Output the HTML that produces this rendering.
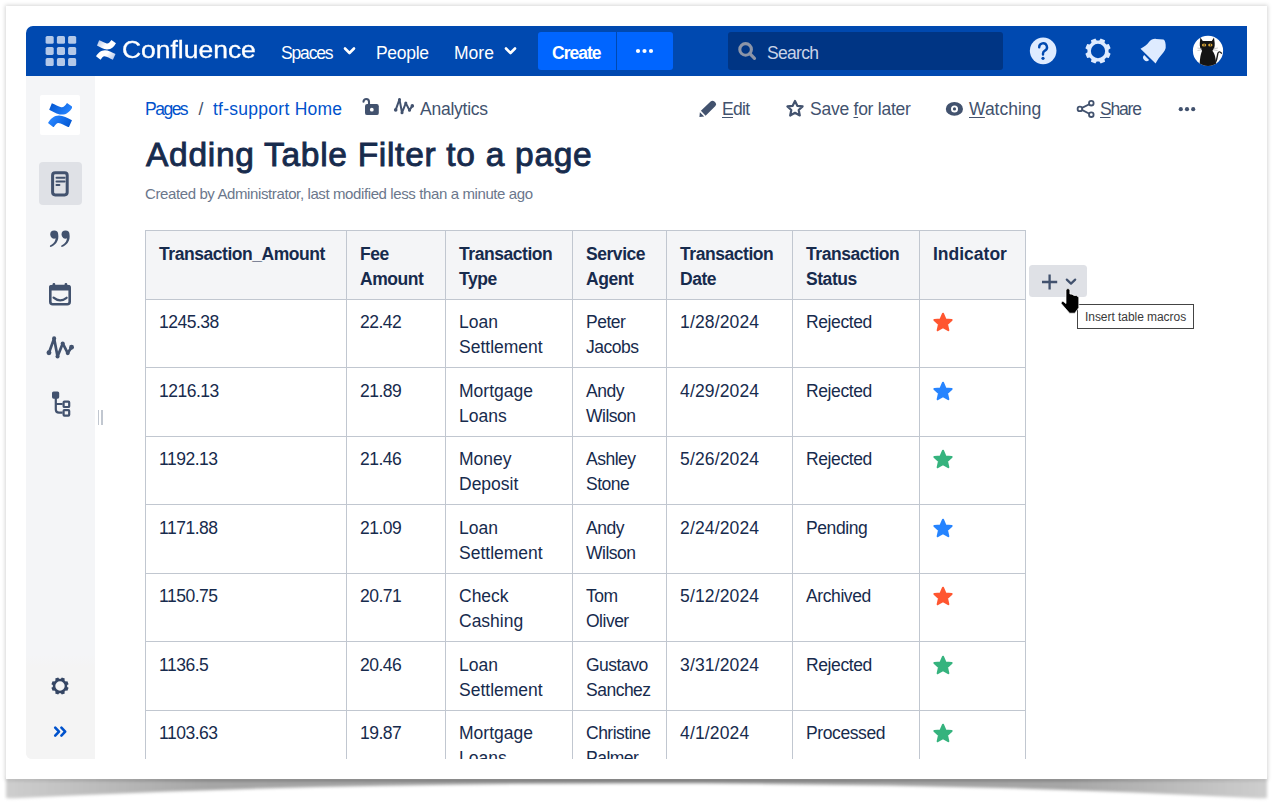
<!DOCTYPE html>
<html><head><meta charset="utf-8">
<style>
*{box-sizing:border-box}
html,body{margin:0;padding:0}
body{width:1281px;height:808px;overflow:hidden;position:relative;background:#fff;font-family:"Liberation Sans",sans-serif;color:#172B4D}
.a{position:absolute}
.t{position:absolute;white-space:nowrap;line-height:1}
#frame{left:6px;top:6px;width:1261px;height:773px;background:#fff;box-shadow:0 0 4px 1px rgba(0,0,0,.16)}
#hdr{left:26px;top:26px;width:1221px;height:50px;background:#0049B0;border-top-left-radius:7px}
#side{left:26px;top:76px;width:69px;height:683px;background:#F4F5F7;border-bottom-left-radius:6px}
.hw{color:#fff;font-size:17.5px}
.crumb{color:#0052CC;font-size:17.5px}
.act{color:#42526E;font-size:17.5px}
u{text-decoration:underline;text-decoration-thickness:1px;text-underline-offset:2px}
.c{position:absolute;white-space:nowrap;font-size:17.5px;line-height:25px;color:#172B4D}
.h{font-weight:bold;letter-spacing:-0.45px}
.n{letter-spacing:-0.5px}
</style></head><body>
<!-- bottom curled shadow -->
<svg class="a" style="left:0;top:770px" width="1281" height="38" viewBox="0 0 1281 38">
<defs>
<linearGradient id="shh" x1="0" y1="0" x2="1" y2="0">
<stop offset="0" stop-color="#cecece"/><stop offset="0.16" stop-color="#a6a6a6"/><stop offset="0.5" stop-color="#999"/><stop offset="0.84" stop-color="#a6a6a6"/><stop offset="1" stop-color="#cecece"/>
</linearGradient>
<linearGradient id="sht" x1="0" y1="0" x2="1" y2="0">
<stop offset="0" stop-color="#000" stop-opacity="0"/><stop offset="0.15" stop-color="#000" stop-opacity="0.12"/><stop offset="0.5" stop-color="#000" stop-opacity="0.14"/><stop offset="0.85" stop-color="#000" stop-opacity="0.12"/><stop offset="1" stop-color="#000" stop-opacity="0"/>
</linearGradient>
<filter id="shb" x="-5%" y="-50%" width="110%" height="200%"><feGaussianBlur stdDeviation="1.5"/></filter>
<filter id="shb2" x="-5%" y="-100%" width="110%" height="300%"><feGaussianBlur stdDeviation="1"/></filter>
</defs>
<path filter="url(#shb)" fill="url(#shh)" d="M6,8 L1267,8 L1267,27.5 Q1266,28.6 1258,28.3 C1050,17 850,13.5 640.5,13.5 C431,13.5 231,17 15,28.3 Q7,28.6 6,27.5 Z"/>
<rect filter="url(#shb2)" x="6" y="8" width="1261" height="3.5" fill="url(#sht)"/>
</svg>

<div id="frame" class="a"></div>
<div id="hdr" class="a"></div>
<div id="side" class="a"></div>
<div class="a" style="left:26px;top:655px;width:69px;height:104px;background:linear-gradient(#F4F5F7,#F4F4F4 12px);border-bottom-left-radius:6px"></div>

<!-- header content -->
<svg class="a" style="left:45px;top:35px" width="32" height="32" viewBox="0 0 32 32">
<g fill="#B3C8E8">
<rect x="0.6" y="0.9" width="8.1" height="7.9" rx="1.6"/><rect x="11.9" y="0.9" width="8.1" height="7.9" rx="1.6"/><rect x="23.1" y="0.9" width="8.1" height="7.9" rx="1.6"/>
<rect x="0.6" y="12" width="8.1" height="7.9" rx="1.6"/><rect x="11.9" y="12" width="8.1" height="7.9" rx="1.6"/><rect x="23.1" y="12" width="8.1" height="7.9" rx="1.6"/>
<rect x="0.6" y="23.1" width="8.1" height="7.9" rx="1.6"/><rect x="11.9" y="23.1" width="8.1" height="7.9" rx="1.6"/><rect x="23.1" y="23.1" width="8.1" height="7.9" rx="1.6"/>
</g></svg>
<svg class="a" style="left:95.9px;top:40.3px" width="20" height="19.8" viewBox="0 0 24.6 24.4">
<defs><linearGradient id="lg1" x1="0" y1="0" x2="1" y2="0.4"><stop offset="0" stop-color="#A8BEE6"/><stop offset="0.6" stop-color="#fff"/></linearGradient>
<linearGradient id="lg2" x1="1" y1="1" x2="0" y2="0.6"><stop offset="0" stop-color="#A8BEE6"/><stop offset="0.6" stop-color="#fff"/></linearGradient></defs>
<path fill="url(#lg1)" d="M1.2,6.8 L3.85,0.3 C7,1.5 10.5,3.6 13.2,4.2 C15.5,4.6 17.2,2.5 19,0 L24.6,3.9 C22.5,7.5 19.5,11.6 13.5,11.6 C9,11.6 5,8.5 1.2,6.8 Z"/>
<path fill="url(#lg2)" d="M0,19.9 C2.5,16 6,12.5 11,12.5 C15,12.5 19.5,15 24,17.2 L20.8,24.4 C17,22.5 13.5,20 10.4,19.9 C8.5,19.9 7.2,22 5.6,24.4 Z"/>
</svg>
<div class="t" style="left:122px;top:39px;font-size:23px;color:#fff;-webkit-text-stroke:0.3px #fff;transform:scaleX(1.15);transform-origin:0 0">Confluence</div>
<div class="t hw" style="left:281px;top:45px;letter-spacing:-1.15px">Spaces</div>
<svg class="a" style="left:343px;top:46px" width="13" height="10" viewBox="0 0 13 10"><path d="M2,2.5 L6.5,7 L11,2.5" fill="none" stroke="#fff" stroke-width="2.6" stroke-linecap="round" stroke-linejoin="round"/></svg>
<div class="t hw" style="left:376px;top:45px;letter-spacing:-0.3px">People</div>
<div class="t hw" style="left:454px;top:45px">More</div>
<svg class="a" style="left:504px;top:46px" width="13" height="10" viewBox="0 0 13 10"><path d="M2,2.5 L6.5,7 L11,2.5" fill="none" stroke="#fff" stroke-width="2.6" stroke-linecap="round" stroke-linejoin="round"/></svg>
<div class="a" style="left:538px;top:32px;width:135px;height:38px;background:#0065FF;border-radius:3px"></div>
<div class="a" style="left:616px;top:32px;width:1px;height:38px;background:#0049B0"></div>
<div class="t" style="left:552px;top:45px;font-size:17.5px;font-weight:bold;color:#fff;letter-spacing:-1px">Create</div>
<svg class="a" style="left:635px;top:48px" width="20" height="6" viewBox="0 0 20 6"><g fill="#fff"><circle cx="3" cy="3" r="2.1"/><circle cx="9.5" cy="3" r="2.1"/><circle cx="16" cy="3" r="2.1"/></g></svg>
<div class="a" style="left:728px;top:32px;width:275px;height:38px;background:#003584;border-radius:3px"></div>
<svg class="a" style="left:737px;top:42px" width="20" height="20" viewBox="0 0 20 20"><circle cx="8.6" cy="7.4" r="5.8" fill="none" stroke="#8C95A8" stroke-width="3.1"/><path d="M12.9,11.7 L17.5,16.4" stroke="#8C95A8" stroke-width="3.2" stroke-linecap="round"/></svg>
<div class="t" style="left:767px;top:45px;font-size:17.5px;color:#C9D3E8;letter-spacing:-0.7px">Search</div>

<!-- header right -->
<svg class="a" style="left:1028px;top:36px" width="30" height="30" viewBox="0 0 30 30">
<circle cx="15.15" cy="14.85" r="13.3" fill="#DEEBFF"/>
<path d="M11.2,11.4 A3.9,3.9 0 1 1 17,14.6 C15.7,15.5 15,16.2 15,17.4 L15,18.6" fill="none" stroke="#0049B0" stroke-width="2.4" stroke-linecap="round"/>
<circle cx="15" cy="22.3" r="1.6" fill="#0049B0"/>
</svg>
<svg class="a" style="left:1082px;top:35px" width="32" height="32" viewBox="0 0 32 32"><path fill="#DEEBFF" fill-rule="evenodd" d="M18.68,3.38 L23.03,5.18 L22.53,7.65 L24.35,9.47 L26.82,8.97 L28.62,13.32 L26.52,14.71 L26.52,17.29 L28.62,18.68 L26.82,23.03 L24.35,22.53 L22.53,24.35 L23.03,26.82 L18.68,28.62 L17.29,26.52 L14.71,26.52 L13.32,28.62 L8.97,26.82 L9.47,24.35 L7.65,22.53 L5.18,23.03 L3.38,18.68 L5.48,17.29 L5.48,14.71 L3.38,13.32 L5.18,8.97 L7.65,9.47 L9.47,7.65 L8.97,5.18 L13.32,3.38 L14.71,5.48 L17.29,5.48 Z M23.15,16 A7.15,7.15 0 1 0 8.85,16 A7.15,7.15 0 1 0 23.15,16 Z"/></svg>
<svg class="a" style="left:1135px;top:34px" width="36" height="34" viewBox="0 0 36 34">
<path fill="#DEEBFF" d="M5.5,14.7 C9,13 12,11 14,8 C16,5.5 18.5,4.6 21,4.9 L28.5,5.5 C30.2,6.5 30.9,9.5 30.7,13.9 C30,17 27.5,19.5 25.3,22.3 C23,25 21.6,28 20.6,29.4 Z"/>
<path fill="#DEEBFF" d="M9.2,21.1 L14.1,26 A3.4,3.4 0 0 1 9.2,21.1 Z"/>
</svg>
<svg class="a" style="left:1192px;top:35px" width="32" height="32" viewBox="0 0 32 32">
<defs><clipPath id="avc"><circle cx="16" cy="15.8" r="15.1"/></clipPath></defs>
<circle cx="16" cy="15.8" r="15.1" fill="#fff"/>
<g clip-path="url(#avc)">
<path fill="#141414" d="M8.4,2.45 L10.8,5.9 L19.8,5.9 L22,2.45 L22.7,8 C22.9,11.5 22.3,13.8 20.6,15.2 C20.6,16 20.7,16.4 20.9,16.6 C22.8,19 23.9,23 24.2,31 L7.6,31 C7.9,23 8.8,19 9.8,16.6 C10,16.4 10,16 9.9,15.2 C8.2,13.8 7.6,11.5 7.8,8 Z"/>
<path d="M23.4,27.6 C25,25 25.2,21 25.8,18.6 C26.3,16.6 28,16.2 29.4,18.2" fill="none" stroke="#1a1a1a" stroke-width="1.4" stroke-linecap="round"/>
<ellipse cx="12.1" cy="9.9" rx="2.2" ry="1.5" fill="#D8A637"/><ellipse cx="18.3" cy="9.9" rx="2.2" ry="1.5" fill="#D8A637"/>
<rect x="11.8" y="8.6" width="0.7" height="2.6" fill="#222"/><rect x="18" y="8.6" width="0.7" height="2.6" fill="#222"/>
<path d="M5.5,13 L10,13.8 M5.5,15.5 L10,14.8 M26,13 L21,13.8 M25.5,15.5 L21,14.8" stroke="#999" stroke-width="0.5"/>
</g></svg>

<!-- breadcrumb row -->
<div class="t crumb" style="left:145px;top:101px;letter-spacing:-1.5px">Pages</div>
<div class="t" style="left:198.5px;top:101px;font-size:17.5px;color:#42526E">/</div>
<div class="t crumb" style="left:213px;top:101px;letter-spacing:0.26px">tf-support Home</div>
<svg class="a" style="left:358px;top:94px" width="26" height="26" viewBox="0 0 26 26">
<rect x="7" y="10.1" width="13.8" height="11" rx="2.2" fill="#42526E"/>
<circle cx="13.8" cy="15.7" r="1.9" fill="#fff"/>
<path d="M5.5,7.7 A2.75,2.75 0 0 1 11,7.7 L11,10.5" fill="none" stroke="#42526E" stroke-width="2.1" stroke-linecap="round"/>
</svg>
<svg class="a" style="left:390px;top:94px" width="28" height="24" viewBox="0 0 28 24">
<path d="M5.7,15.9 L9.5,5.4 L12,18.7 L15.8,9.1 L19.5,16.2 L22.3,11.9" fill="none" stroke="#42526E" stroke-width="2" stroke-linecap="round" stroke-linejoin="round"/>
<g fill="#42526E"><circle cx="5.7" cy="15.9" r="1.8"/><circle cx="9.5" cy="5.4" r="1.5"/><circle cx="12" cy="18.7" r="1.5"/><circle cx="15.8" cy="9.1" r="1.5"/><circle cx="19.5" cy="16.2" r="1.5"/><circle cx="22.3" cy="11.9" r="1.8"/></g>
</svg>
<div class="t act" style="left:420px;top:101px;letter-spacing:-0.25px">Analytics</div>

<!-- actions -->
<svg class="a" style="left:694px;top:96px" width="30" height="26" viewBox="0 0 30 26">
<path fill="#42526E" d="M6.9,14.8 L16.6,5.4 Q18.6,3.8 20.4,5.6 L21.4,6.6 Q23,8.4 21.4,10.1 L11.6,19.7 Z"/>
<path fill="#42526E" d="M5.9,16.2 L10.2,20.5 L5.4,21.1 Z"/>
</svg>
<div class="t act" style="left:722px;top:101px;letter-spacing:-0.66px"><u>E</u>dit</div>
<svg class="a" style="left:782px;top:96px" width="26" height="26" viewBox="0 0 26 26">
<path d="M13,5 L15.3,9.8 L20.6,10.4 L16.7,14 L17.8,19.5 L13,16.8 L8.2,19.5 L9.3,14 L5.4,10.4 L10.7,9.8 Z" fill="none" stroke="#42526E" stroke-width="2.2" stroke-linejoin="round"/>
</svg>
<div class="t act" style="left:810px;top:101px;letter-spacing:-0.25px">Save <u>f</u>or later</div>
<svg class="a" style="left:940px;top:96px" width="30" height="26" viewBox="0 0 30 26">
<ellipse cx="14.4" cy="12.9" rx="8.6" ry="6.9" fill="#42526E"/>
<circle cx="14.5" cy="12.9" r="3.5" fill="#fff"/><circle cx="14.5" cy="12.9" r="1.6" fill="#42526E"/>
</svg>
<div class="t act" style="left:969px;top:101px"><u>W</u>atching</div>
<svg class="a" style="left:1072px;top:96px" width="28" height="26" viewBox="0 0 28 26">
<path d="M8,12.9 L19.3,7.2 M8,12.9 L19.3,18.7" stroke="#42526E" stroke-width="1.8"/>
<g fill="#fff" stroke="#42526E" stroke-width="1.8"><circle cx="19.3" cy="7.2" r="2.3"/><circle cx="7.9" cy="12.9" r="2.3"/><circle cx="19.3" cy="18.7" r="2.3"/></g>
</svg>
<div class="t act" style="left:1100px;top:101px;letter-spacing:-1.2px"><u>S</u>hare</div>
<svg class="a" style="left:1176px;top:104px" width="22" height="10" viewBox="0 0 22 10"><g fill="#42526E"><circle cx="4.8" cy="5.2" r="2.1"/><circle cx="11" cy="5.2" r="2.1"/><circle cx="17.2" cy="5.2" r="2.1"/></g></svg>

<!-- title -->
<div class="t" style="left:146px;top:138px;font-size:33.5px;color:#172B4D;letter-spacing:0.71px;-webkit-text-stroke:0.9px #172B4D">Adding Table Filter to a page</div>
<div class="t" style="left:145px;top:186px;font-size:15px;color:#6B778C;letter-spacing:-0.39px">Created by Administrator, last modified less than a minute ago</div>

<!-- sidebar -->
<div class="a" style="left:40px;top:95px;width:40px;height:40px;background:#fff;border-radius:2px"></div>
<svg class="a" style="left:47.6px;top:102.7px" width="24.6" height="24.4" viewBox="0 0 24.6 24.4">
<defs><linearGradient id="sg1" x1="0" y1="0" x2="1" y2="0.4"><stop offset="0" stop-color="#0052CC"/><stop offset="1" stop-color="#2684FF"/></linearGradient>
<linearGradient id="sg2" x1="1" y1="1" x2="0" y2="0.6"><stop offset="0" stop-color="#0052CC"/><stop offset="1" stop-color="#2684FF"/></linearGradient></defs>
<path fill="url(#sg1)" d="M1.2,6.8 L3.85,0.3 C7,1.5 10.5,3.6 13.2,4.2 C15.5,4.6 17.2,2.5 19,0 L24.6,3.9 C22.5,7.5 19.5,11.6 13.5,11.6 C9,11.6 5,8.5 1.2,6.8 Z"/>
<path fill="url(#sg2)" d="M0,19.9 C2.5,16 6,12.5 11,12.5 C15,12.5 19.5,15 24,17.2 L20.8,24.4 C17,22.5 13.5,20 10.4,19.9 C8.5,19.9 7.2,22 5.6,24.4 Z"/>
</svg>
<div class="a" style="left:39px;top:162px;width:43px;height:43px;background:#DFE1E6;border-radius:4px"></div>
<svg class="a" style="left:44px;top:165px" width="32" height="36" viewBox="0 0 32 36">
<rect x="8.6" y="7.7" width="14.6" height="22.2" rx="2.6" fill="none" stroke="#42526E" stroke-width="3"/>
<path d="M12.5,12.7 L20.6,12.7 M12.5,16.4 L20.6,16.4 M12.5,20.1 L15.4,20.1" stroke="#42526E" stroke-width="2" stroke-linecap="round"/>
</svg>
<svg class="a" style="left:44px;top:224px" width="32" height="30" viewBox="0 0 32 30">
<g fill="#42526E"><path d="M6.2,10.6 A4,4 0 0 1 14.2,10.6 C14.6,13 14.4,16.5 12.3,19 C10.8,20.9 8.5,22.6 6.3,22.9 Q5.5,22.6 6.1,21.6 C8.5,20.4 10.6,18.5 11.4,15.8 L11.57,14.36 A4,4 0 0 1 6.2,10.6 Z"/><path transform="translate(11.3,0)" d="M6.2,10.6 A4,4 0 0 1 14.2,10.6 C14.6,13 14.4,16.5 12.3,19 C10.8,20.9 8.5,22.6 6.3,22.9 Q5.5,22.6 6.1,21.6 C8.5,20.4 10.6,18.5 11.4,15.8 L11.57,14.36 A4,4 0 0 1 6.2,10.6 Z"/></g></svg>
<svg class="a" style="left:44px;top:278px" width="32" height="32" viewBox="0 0 32 32">
<rect x="6.3" y="8" width="19.4" height="18.2" rx="2.5" fill="none" stroke="#42526E" stroke-width="2.6"/>
<rect x="5" y="7" width="21.8" height="5.5" rx="2" fill="#42526E"/>
<rect x="8.6" y="5" width="2.6" height="4" rx="1" fill="#42526E"/><rect x="20.6" y="5" width="2.6" height="4" rx="1" fill="#42526E"/>
<path d="M9.6,19.6 Q16,25 22.6,19.8" fill="none" stroke="#42526E" stroke-width="2.3" stroke-linecap="round"/>
</svg>
<svg class="a" style="left:43.7px;top:335px" width="38.1" height="34.3" viewBox="0 0 28 25.2">
<g transform="translate(-2.05,-2.9)">
<path d="M5.7,15.9 L9.5,5.4 L12,18.7 L15.8,9.1 L19.5,16.2 L22.3,11.9" fill="none" stroke="#42526E" stroke-width="2" stroke-linecap="round" stroke-linejoin="round"/>
<g fill="#42526E"><circle cx="5.7" cy="15.9" r="1.8"/><circle cx="9.5" cy="5.4" r="1.5"/><circle cx="12" cy="18.7" r="1.5"/><circle cx="15.8" cy="9.1" r="1.5"/><circle cx="19.5" cy="16.2" r="1.5"/><circle cx="22.3" cy="11.9" r="1.8"/></g>
</g></svg>
<svg class="a" style="left:44px;top:386px" width="32" height="36" viewBox="0 0 32 36">
<rect x="8" y="5.5" width="7.2" height="7.2" rx="1.6" fill="#42526E"/>
<path d="M11.8,10 L11.8,23.5 Q11.8,26.6 15,26.6 L18.6,26.6 M11.8,18 L18.6,18" fill="none" stroke="#42526E" stroke-width="2.2"/>
<rect x="19.6" y="15.6" width="5.6" height="5.4" rx="0.8" fill="none" stroke="#42526E" stroke-width="2.2"/>
<rect x="19.6" y="24.2" width="5.6" height="5.4" rx="0.8" fill="none" stroke="#42526E" stroke-width="2.2"/>
</svg>
<div class="a" style="left:97.5px;top:410px;width:1.6px;height:15px;background:#C1C7D0"></div>
<div class="a" style="left:101px;top:410px;width:1.6px;height:15px;background:#C1C7D0"></div>
<svg class="a" style="left:50.35px;top:676px" width="20" height="20" viewBox="0 0 20 20"><path fill="#344563" fill-rule="evenodd" d="M11.83,1.39 L14.79,2.62 L14.43,4.33 L15.67,5.57 L17.38,5.21 L18.61,8.17 L17.15,9.12 L17.15,10.88 L18.61,11.83 L17.38,14.79 L15.67,14.43 L14.43,15.67 L14.79,17.38 L11.83,18.61 L10.88,17.15 L9.12,17.15 L8.17,18.61 L5.21,17.38 L5.57,15.67 L4.33,14.43 L2.62,14.79 L1.39,11.83 L2.85,10.88 L2.85,9.12 L1.39,8.17 L2.62,5.21 L4.33,5.57 L5.57,4.33 L5.21,2.62 L8.17,1.39 L9.12,2.85 L10.88,2.85 Z M14.7,10 A4.7,4.7 0 1 0 5.3,10 A4.7,4.7 0 1 0 14.7,10 Z"/></svg>
<svg class="a" style="left:52px;top:722px" width="18" height="18" viewBox="0 0 18 18">
<path d="M3.2,5.6 L7,9.6 L3.2,13.6 M9.4,5.6 L13.2,9.6 L9.4,13.6" fill="none" stroke="#0052CC" stroke-width="2.6" stroke-linecap="round" stroke-linejoin="round"/>
</svg>
<!-- table -->
<div class="a" style="left:145px;top:230px;width:881px;height:70px;background:#F4F5F7"></div>
<div class="a" style="left:145px;top:230px;width:881px;height:1px;background:#C1C7D0"></div>
<div class="a" style="left:145px;top:299px;width:881px;height:1px;background:#C1C7D0"></div>
<div class="a" style="left:145px;top:367px;width:881px;height:1px;background:#C1C7D0"></div>
<div class="a" style="left:145px;top:436px;width:881px;height:1px;background:#C1C7D0"></div>
<div class="a" style="left:145px;top:504px;width:881px;height:1px;background:#C1C7D0"></div>
<div class="a" style="left:145px;top:573px;width:881px;height:1px;background:#C1C7D0"></div>
<div class="a" style="left:145px;top:641px;width:881px;height:1px;background:#C1C7D0"></div>
<div class="a" style="left:145px;top:710px;width:881px;height:1px;background:#C1C7D0"></div>
<div class="a" style="left:145px;top:230px;width:1px;height:529px;background:#C1C7D0"></div>
<div class="a" style="left:346px;top:230px;width:1px;height:529px;background:#C1C7D0"></div>
<div class="a" style="left:445px;top:230px;width:1px;height:529px;background:#C1C7D0"></div>
<div class="a" style="left:572px;top:230px;width:1px;height:529px;background:#C1C7D0"></div>
<div class="a" style="left:666px;top:230px;width:1px;height:529px;background:#C1C7D0"></div>
<div class="a" style="left:792px;top:230px;width:1px;height:529px;background:#C1C7D0"></div>
<div class="a" style="left:919px;top:230px;width:1px;height:529px;background:#C1C7D0"></div>
<div class="a" style="left:1025px;top:230px;width:1px;height:529px;background:#C1C7D0"></div>
<div class="a" style="left:145px;top:230px;width:881px;height:529px;overflow:hidden">
<div class="c h" style="left:14px;top:12px">Transaction_Amount</div>
<div class="c h" style="left:215px;top:12px">Fee<br>Amount</div>
<div class="c h" style="left:314px;top:12px">Transaction<br>Type</div>
<div class="c h" style="left:441px;top:12px">Service<br>Agent</div>
<div class="c h" style="left:535px;top:12px">Transaction<br>Date</div>
<div class="c h" style="left:661px;top:12px">Transaction<br>Status</div>
<div class="c h" style="left:788px;top:12px;letter-spacing:0">Indicator</div>
<div class="c" style="left:14px;top:80px;letter-spacing:-0.5px">1245.38</div>
<div class="c" style="left:215px;top:80px;letter-spacing:-0.5px">22.42</div>
<div class="c" style="left:314px;top:80px;letter-spacing:0px">Loan<br>Settlement</div>
<div class="c" style="left:441px;top:80px;letter-spacing:-0.5px">Peter<br>Jacobs</div>
<div class="c" style="left:535px;top:80px;letter-spacing:0.15px">1/28/2024</div>
<div class="c" style="left:661px;top:80px;letter-spacing:-0.4px">Rejected</div>
<div class="a" style="left:787px;top:81px;width:22px;height:22px"><svg width="22" height="22" viewBox="0 0 24 24"><path fill="#FF5630" d="M12.00,3.00 L14.70,9.18 L21.42,9.84 L16.37,14.32 L17.82,20.91 L12.00,17.50 L6.18,20.91 L7.63,14.32 L2.58,9.84 L9.30,9.18 Z" stroke="#FF5630" stroke-width="2.2" stroke-linejoin="round"/></svg></div>
<div class="c" style="left:14px;top:148.5px;letter-spacing:-0.5px">1216.13</div>
<div class="c" style="left:215px;top:148.5px;letter-spacing:-0.5px">21.89</div>
<div class="c" style="left:314px;top:148.5px;letter-spacing:0px">Mortgage<br>Loans</div>
<div class="c" style="left:441px;top:148.5px;letter-spacing:-0.5px">Andy<br>Wilson</div>
<div class="c" style="left:535px;top:148.5px;letter-spacing:0.15px">4/29/2024</div>
<div class="c" style="left:661px;top:148.5px;letter-spacing:-0.4px">Rejected</div>
<div class="a" style="left:787px;top:149.5px;width:22px;height:22px"><svg width="22" height="22" viewBox="0 0 24 24"><path fill="#2684FF" d="M12.00,3.00 L14.70,9.18 L21.42,9.84 L16.37,14.32 L17.82,20.91 L12.00,17.50 L6.18,20.91 L7.63,14.32 L2.58,9.84 L9.30,9.18 Z" stroke="#2684FF" stroke-width="2.2" stroke-linejoin="round"/></svg></div>
<div class="c" style="left:14px;top:217px;letter-spacing:-0.5px">1192.13</div>
<div class="c" style="left:215px;top:217px;letter-spacing:-0.5px">21.46</div>
<div class="c" style="left:314px;top:217px;letter-spacing:0px">Money<br>Deposit</div>
<div class="c" style="left:441px;top:217px;letter-spacing:-0.5px">Ashley<br>Stone</div>
<div class="c" style="left:535px;top:217px;letter-spacing:0.15px">5/26/2024</div>
<div class="c" style="left:661px;top:217px;letter-spacing:-0.4px">Rejected</div>
<div class="a" style="left:787px;top:218px;width:22px;height:22px"><svg width="22" height="22" viewBox="0 0 24 24"><path fill="#36B37E" d="M12.00,3.00 L14.70,9.18 L21.42,9.84 L16.37,14.32 L17.82,20.91 L12.00,17.50 L6.18,20.91 L7.63,14.32 L2.58,9.84 L9.30,9.18 Z" stroke="#36B37E" stroke-width="2.2" stroke-linejoin="round"/></svg></div>
<div class="c" style="left:14px;top:285.5px;letter-spacing:-0.5px">1171.88</div>
<div class="c" style="left:215px;top:285.5px;letter-spacing:-0.5px">21.09</div>
<div class="c" style="left:314px;top:285.5px;letter-spacing:0px">Loan<br>Settlement</div>
<div class="c" style="left:441px;top:285.5px;letter-spacing:-0.5px">Andy<br>Wilson</div>
<div class="c" style="left:535px;top:285.5px;letter-spacing:0.15px">2/24/2024</div>
<div class="c" style="left:661px;top:285.5px;letter-spacing:-0.4px">Pending</div>
<div class="a" style="left:787px;top:286.5px;width:22px;height:22px"><svg width="22" height="22" viewBox="0 0 24 24"><path fill="#2684FF" d="M12.00,3.00 L14.70,9.18 L21.42,9.84 L16.37,14.32 L17.82,20.91 L12.00,17.50 L6.18,20.91 L7.63,14.32 L2.58,9.84 L9.30,9.18 Z" stroke="#2684FF" stroke-width="2.2" stroke-linejoin="round"/></svg></div>
<div class="c" style="left:14px;top:354px;letter-spacing:-0.5px">1150.75</div>
<div class="c" style="left:215px;top:354px;letter-spacing:-0.5px">20.71</div>
<div class="c" style="left:314px;top:354px;letter-spacing:0px">Check<br>Cashing</div>
<div class="c" style="left:441px;top:354px;letter-spacing:-0.5px">Tom<br>Oliver</div>
<div class="c" style="left:535px;top:354px;letter-spacing:0.15px">5/12/2024</div>
<div class="c" style="left:661px;top:354px;letter-spacing:-0.4px">Archived</div>
<div class="a" style="left:787px;top:355px;width:22px;height:22px"><svg width="22" height="22" viewBox="0 0 24 24"><path fill="#FF5630" d="M12.00,3.00 L14.70,9.18 L21.42,9.84 L16.37,14.32 L17.82,20.91 L12.00,17.50 L6.18,20.91 L7.63,14.32 L2.58,9.84 L9.30,9.18 Z" stroke="#FF5630" stroke-width="2.2" stroke-linejoin="round"/></svg></div>
<div class="c" style="left:14px;top:422.5px;letter-spacing:-0.5px">1136.5</div>
<div class="c" style="left:215px;top:422.5px;letter-spacing:-0.5px">20.46</div>
<div class="c" style="left:314px;top:422.5px;letter-spacing:0px">Loan<br>Settlement</div>
<div class="c" style="left:441px;top:422.5px;letter-spacing:-0.5px">Gustavo<br>Sanchez</div>
<div class="c" style="left:535px;top:422.5px;letter-spacing:0.15px">3/31/2024</div>
<div class="c" style="left:661px;top:422.5px;letter-spacing:-0.4px">Rejected</div>
<div class="a" style="left:787px;top:423.5px;width:22px;height:22px"><svg width="22" height="22" viewBox="0 0 24 24"><path fill="#36B37E" d="M12.00,3.00 L14.70,9.18 L21.42,9.84 L16.37,14.32 L17.82,20.91 L12.00,17.50 L6.18,20.91 L7.63,14.32 L2.58,9.84 L9.30,9.18 Z" stroke="#36B37E" stroke-width="2.2" stroke-linejoin="round"/></svg></div>
<div class="c" style="left:14px;top:491px;letter-spacing:-0.5px">1103.63</div>
<div class="c" style="left:215px;top:491px;letter-spacing:-0.5px">19.87</div>
<div class="c" style="left:314px;top:491px;letter-spacing:0px">Mortgage<br>Loans</div>
<div class="c" style="left:441px;top:491px;letter-spacing:-0.5px">Christine<br>Palmer</div>
<div class="c" style="left:535px;top:491px;letter-spacing:0.15px">4/1/2024</div>
<div class="c" style="left:661px;top:491px;letter-spacing:-0.4px">Processed</div>
<div class="a" style="left:787px;top:492px;width:22px;height:22px"><svg width="22" height="22" viewBox="0 0 24 24"><path fill="#36B37E" d="M12.00,3.00 L14.70,9.18 L21.42,9.84 L16.37,14.32 L17.82,20.91 L12.00,17.50 L6.18,20.91 L7.63,14.32 L2.58,9.84 L9.30,9.18 Z" stroke="#36B37E" stroke-width="2.2" stroke-linejoin="round"/></svg></div>
</div>

<!-- macro button -->
<div class="a" style="left:1029px;top:265px;width:58px;height:32px;background:#DFE1E6;border-radius:3.5px"></div>
<svg class="a" style="left:1039px;top:272px" width="44" height="20" viewBox="0 0 44 20">
<path d="M3,10 L18.2,10 M10.6,2.6 L10.6,17.4" stroke="#42526E" stroke-width="2.3"/>
<path d="M27.8,7.6 L32,11.6 L36.2,7.6" fill="none" stroke="#42526E" stroke-width="2.2" stroke-linecap="round" stroke-linejoin="round"/>
</svg>
<!-- tooltip -->
<div class="a" style="left:1077px;top:304px;width:117px;height:25px;background:#fff;border:1px solid #444"></div>
<div class="t" style="left:1085px;top:311px;font-size:12px;color:#3a3a3a;letter-spacing:-0.05px">Insert table macros</div>
<!-- cursor -->
<svg class="a" style="left:1056px;top:284px" width="28" height="34" viewBox="1056 284 28 34">
<path d="M1066,290.6 Q1066,288.6 1067.9,288.6 Q1069.9,288.6 1069.9,290.6 L1069.9,294 L1072,294.2 L1074,295.4 L1076.5,295.6 L1078.8,297.2 L1078.8,307.6 L1074.8,313.2 L1069.6,313.2 L1061.2,303.6 Q1060.8,301.4 1062.9,301.2 L1066,303.6 Z" fill="#000" stroke="#fff" stroke-width="0.7"/>
</svg>
</body></html>
